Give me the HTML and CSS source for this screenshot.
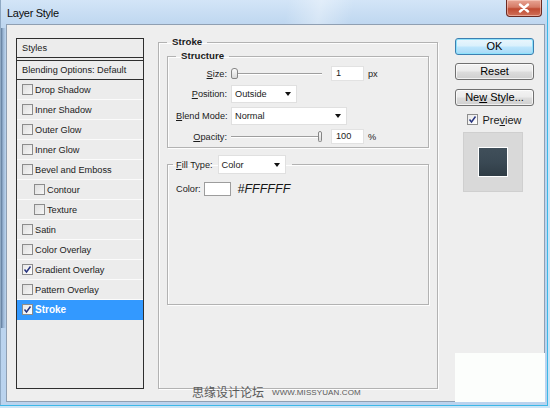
FILE: index.html
```html
<!DOCTYPE html>
<html lang="en">
<head>
<meta charset="utf-8">
<title>Layer Style</title>
<link rel="stylesheet" href="styles.css">
</head>
<body>
<div class="window">
  <div class="titlebar">
    <span class="title">Layer Style</span>
    <span class="close"><svg width="12" height="10" viewBox="0 0 12 10"><path d="M2 1.5 L10 8.5 M10 1.5 L2 8.5" stroke="#fff" stroke-width="2.4" stroke-linecap="round"/></svg></span>
  </div>
  <div class="client">
    <ul class="styles-list">
      <li class="list-head">Styles</li>
      <li class="list-blend">Blending Options: Default</li>
      <li class="item"><span class="cb"></span>Drop Shadow</li>
      <li class="item"><span class="cb"></span>Inner Shadow</li>
      <li class="item"><span class="cb"></span>Outer Glow</li>
      <li class="item"><span class="cb"></span>Inner Glow</li>
      <li class="item"><span class="cb"></span>Bevel and Emboss</li>
      <li class="item sub"><span class="cb"></span>Contour</li>
      <li class="item sub"><span class="cb"></span>Texture</li>
      <li class="item"><span class="cb"></span>Satin</li>
      <li class="item"><span class="cb"></span>Color Overlay</li>
      <li class="item"><span class="cb checked"><svg width="9" height="9" viewBox="0 0 9 9"><path d="M1.5 4.5 L3.5 7 L7.5 1.5" fill="none" stroke="#27347f" stroke-width="1.5"/></svg></span>Gradient Overlay</li>
      <li class="item"><span class="cb"></span>Pattern Overlay</li>
      <li class="item selected"><span class="cb checked"><svg width="9" height="9" viewBox="0 0 9 9"><path d="M1.5 4.5 L3.5 7 L7.5 1.5" fill="none" stroke="#27347f" stroke-width="1.5"/></svg></span>Stroke</li>
    </ul>

    <fieldset class="group stroke">
      <legend>Stroke</legend>
      <fieldset class="group structure">
        <legend>Structure</legend>
        <div class="form">
          <span class="lbl"><u>S</u>ize:</span>
          <div class="ctrl">
            <div class="slider"><span class="thumb" style="margin-left:0px"></span></div>
            <span class="field">1</span><span class="unit">px</span>
          </div>
          <span class="lbl"><u>P</u>osition:</span>
          <div class="ctrl"><span class="select sel-pos">Outside<i class="arrow"></i></span></div>
          <span class="lbl"><u>B</u>lend Mode:</span>
          <div class="ctrl"><span class="select sel-blend">Normal<i class="arrow"></i></span></div>
          <span class="lbl"><u>O</u>pacity:</span>
          <div class="ctrl">
            <div class="slider"><span class="thumb" style="margin-left:87px"></span></div>
            <span class="field">100</span><span class="unit">%</span>
          </div>
        </div>
      </fieldset>
      <fieldset class="group filltype">
        <legend><span class="lbl"><u>F</u>ill Type:</span><span class="select sel-fill">Color<i class="arrow"></i></span></legend>
        <div class="color-row">
          <span class="lbl">Color:</span>
          <span class="swatch"></span>
          <span class="hex">#FFFFFF</span>
        </div>
      </fieldset>
    </fieldset>

    <div class="side">
      <span class="btn btn-ok">OK</span>
      <span class="btn btn-reset">Reset</span>
      <span class="btn btn-new">Ne<u>w</u> Style...</span>
      <div class="preview-row">
        <span class="cb checked"><svg width="9" height="9" viewBox="0 0 9 9"><path d="M1.5 4.5 L3.5 7 L7.5 1.5" fill="none" stroke="#27347f" stroke-width="1.5"/></svg></span>
        <span>Pre<u>v</u>iew</span>
      </div>
      <div class="preview-box"><span class="preview-swatch"></span></div>
    </div>
  </div>
  <div class="wm-box"></div>
  <div class="wm-text"><span class="wm-cn">思缘设计论坛</span><span class="wm-en">WWW.MISSYUAN.COM</span></div>
</div>
</body>
</html>
```

FILE: styles.css
```css
* { box-sizing: border-box; margin: 0; padding: 0; }
html, body { width: 550px; height: 408px; overflow: hidden; }
body {
  font-family: "Liberation Sans", Arial, sans-serif;
  font-size: 9.2px;
  color: #1b1b1b;
  background: #fff;
}
u { text-decoration: underline; text-underline-offset: 1px; }

.window {
  position: relative;
  width: 550px;
  height: 408px;
  display: flex;
  flex-direction: column;
  padding: 0 5px 6px 6px;
  background:
    linear-gradient(to right, rgba(40, 68, 100, 0.85) 0, rgba(120, 150, 185, 0.55) 3px, rgba(190, 214, 238, 0) 6px) 0 28px / 6px 300px no-repeat,
    linear-gradient(100deg, rgba(255,255,255,0) 52%, rgba(255,255,255,0.35) 58%, rgba(255,255,255,0) 64%) 0 0 / 100% 24px no-repeat,
    linear-gradient(180deg, #d3e5f7 0, #bfd7f0 24px, #bad3ee 100%);
  box-shadow:
    inset -2px -2px 0 #cbe5f6,
    inset -3px -3px 0 #3cb8e7,
    inset 1px 0 0 #8fa9c4;
}

.titlebar {
  height: 24px;
  display: flex;
  align-items: flex-start;
  justify-content: space-between;
  padding-left: 1px;
}
.title {
  font-size: 11px;
  letter-spacing: -0.3px;
  margin-top: 7px;
  color: #0c0c0c;
}
.close {
  width: 36px;
  height: 17px;
  margin-right: 3px;
  border: 1px solid #6b2a22;
  border-top: none;
  border-radius: 0 0 4px 4px;
  background: linear-gradient(180deg, #e8a595 0%, #d57a66 45%, #c04a32 55%, #d0715a 100%);
  box-shadow: inset 0 0 0 1px rgba(255, 220, 210, 0.5);
  display: flex;
  align-items: center;
  justify-content: center;
}

.client {
  flex: 1;
  display: flex;
  align-items: flex-start;
  padding: 11px 10px 0 9px;
  background: #eeeeee;
  border: 1px solid #8f9fb2;
}

/* Styles list */
.styles-list {
  list-style: none;
  width: 128px;
  height: 351px;
  margin-top: 2px;
  border: 1px solid #2e2e2e;
  background: #ececec;
  flex-shrink: 0;
}
.list-head {
  height: 19px;
  line-height: 18px;
  padding-left: 5px;
  border-bottom: 1px solid #2e2e2e;
}
.list-blend {
  height: 20px;
  line-height: 18px;
  margin-top: 2px;
  padding-left: 5px;
  border-top: 1px solid #2e2e2e;
  border-bottom: 1px solid #2e2e2e;
}
.item {
  height: 20px;
  display: flex;
  align-items: center;
  padding-left: 5px;
  border-bottom: 1px solid #fbfbfb;
}
.item.sub { padding-left: 17px; }
.item.selected {
  background: #3399ff;
  color: #fff;
  font-weight: bold;
  font-size: 10px;
  border-bottom-color: #3399ff;
}
.cb {
  width: 11px;
  height: 11px;
  margin-right: 2px;
  border: 1px solid #8c8c8c;
  background: linear-gradient(135deg, #dedede 0%, #f6f6f6 100%);
  display: flex;
  align-items: center;
  justify-content: center;
  flex-shrink: 0;
}
.cb.checked { background: linear-gradient(135deg, #e8e8e8 0%, #ffffff 100%); }

/* Group boxes */
.group {
  border: 1px solid #b2b2b2;
  box-shadow: inset 1px 1px 0 #fdfdfd, 1px 1px 0 #fdfdfd;
  padding: 0 8px;
  min-width: 0;
}
.group > legend {
  font-weight: bold;
  font-size: 9.7px;
  line-height: 12px;
  padding: 0 5px;
}
.stroke {
  width: 280px;
  height: 353px;
  margin-left: 14px;
  flex-shrink: 0;
}
.structure {
  width: 262px;
  height: 98px;
  margin-top: 2px;
}
.filltype {
  width: 262px;
  height: 150px;
  margin-top: 7px;
}
.filltype > legend {
  display: flex;
  align-items: center;
  gap: 5px;
  font-weight: normal;
  font-size: 9.2px;
  line-height: normal;
  padding: 0 6px 0 3px;
  margin-left: -3px;
}

.form {
  display: grid;
  grid-template-columns: 51px auto;
  column-gap: 4px;
  row-gap: 4px;
  align-items: center;
  padding-top: 4px;
}
.lbl { text-align: right; white-space: nowrap; }
.ctrl { display: flex; align-items: center; }
.slider {
  width: 91px;
  height: 15px;
  display: flex;
  align-items: center;
  background: linear-gradient(180deg, transparent 7px, #9e9e9e 7px, #9e9e9e 8px, #ffffff 8px, #ffffff 9px, transparent 9px);
  margin-right: 9px;
}
.thumb {
  width: 7px;
  height: 11px;
  border: 1px solid #858585;
  border-radius: 3px 3px 2px 2px;
  background: linear-gradient(180deg, #fbfbfb, #d8d8d8);
}
.field {
  width: 33px;
  height: 15px;
  background: #fff;
  border: 1px solid #e2e2e2;
  padding-left: 4px;
  line-height: 13px;
}
.unit { margin-left: 4px; }
.select {
  height: 18px;
  background: #fff;
  border: 1px solid #e0e0e0;
  padding: 0 5px 0 3px;
  display: flex;
  align-items: center;
  justify-content: space-between;
}
.sel-pos { width: 66px; }
.sel-blend { width: 116px; }
.sel-fill { width: 68px; height: 19px; }
.arrow {
  width: 0;
  height: 0;
  border-left: 3.5px solid transparent;
  border-right: 3.5px solid transparent;
  border-top: 4px solid #111;
}

.color-row {
  display: flex;
  align-items: center;
  padding-top: 8px;
}
.swatch {
  width: 27px;
  height: 14px;
  margin-left: 3px;
  background: #fff;
  border: 1px solid #9d9d9d;
}
.hex {
  margin-left: 7px;
  font-size: 12.5px;
  font-style: italic;
  color: #161616;
}

/* Right side */
.side {
  width: 79px;
  margin-left: 17px;
  margin-top: 2px;
  display: flex;
  flex-direction: column;
  flex-shrink: 0;
  font-size: 11px;
}
.btn {
  display: block;
  height: 17px;
  line-height: 15px;
  text-align: center;
  border: 1px solid #707070;
  border-radius: 3px;
  background: linear-gradient(180deg, #f3f3f3 0%, #ebebeb 48%, #dddddd 52%, #cfcfcf 100%);
  box-shadow: inset 0 0 0 1px rgba(255,255,255,0.7);
  color: #000;
}
.btn-ok {
  border-color: #3c7fb1;
  background: linear-gradient(180deg, #eaf6fd 0%, #d9f0fc 48%, #bee6fd 52%, #a7d9f5 100%);
  box-shadow: inset 0 0 0 1px #8ee2fb;
}
.btn-reset { margin-top: 8px; }
.btn-new { margin-top: 9px; }
.preview-row {
  margin-top: 8px;
  height: 11px;
  display: flex;
  align-items: center;
  justify-content: center;
  gap: 2px;
}
.preview-box {
  width: 60px;
  height: 60px;
  margin: 7px 0 0 8px;
  background: #d9d9d9;
  border: 1px solid #cfcfcf;
  display: flex;
  align-items: center;
  justify-content: center;
}
.preview-swatch {
  width: 30px;
  height: 30px;
  border: 1px solid #fff;
  background: linear-gradient(180deg, #404f5a 0%, #3a4954 50%, #2f3c45 100%);
}

/* Watermark overlay */
.wm-box {
  position: absolute;
  left: 455px;
  top: 353px;
  width: 90px;
  height: 49px;
  background: #fcfefc;
}
.wm-text {
  position: absolute;
  left: 192px;
  top: 384px;
  display: flex;
  align-items: center;
  color: #5a5a5a;
}
.wm-cn {
  font-family: "Noto Sans CJK SC", sans-serif;
  font-size: 12px;
  line-height: 16px;
}
.wm-en {
  margin-left: 8px;
  font-family: "Liberation Sans", Arial, sans-serif;
  font-size: 8px;
  letter-spacing: 0.1px;
}
```
